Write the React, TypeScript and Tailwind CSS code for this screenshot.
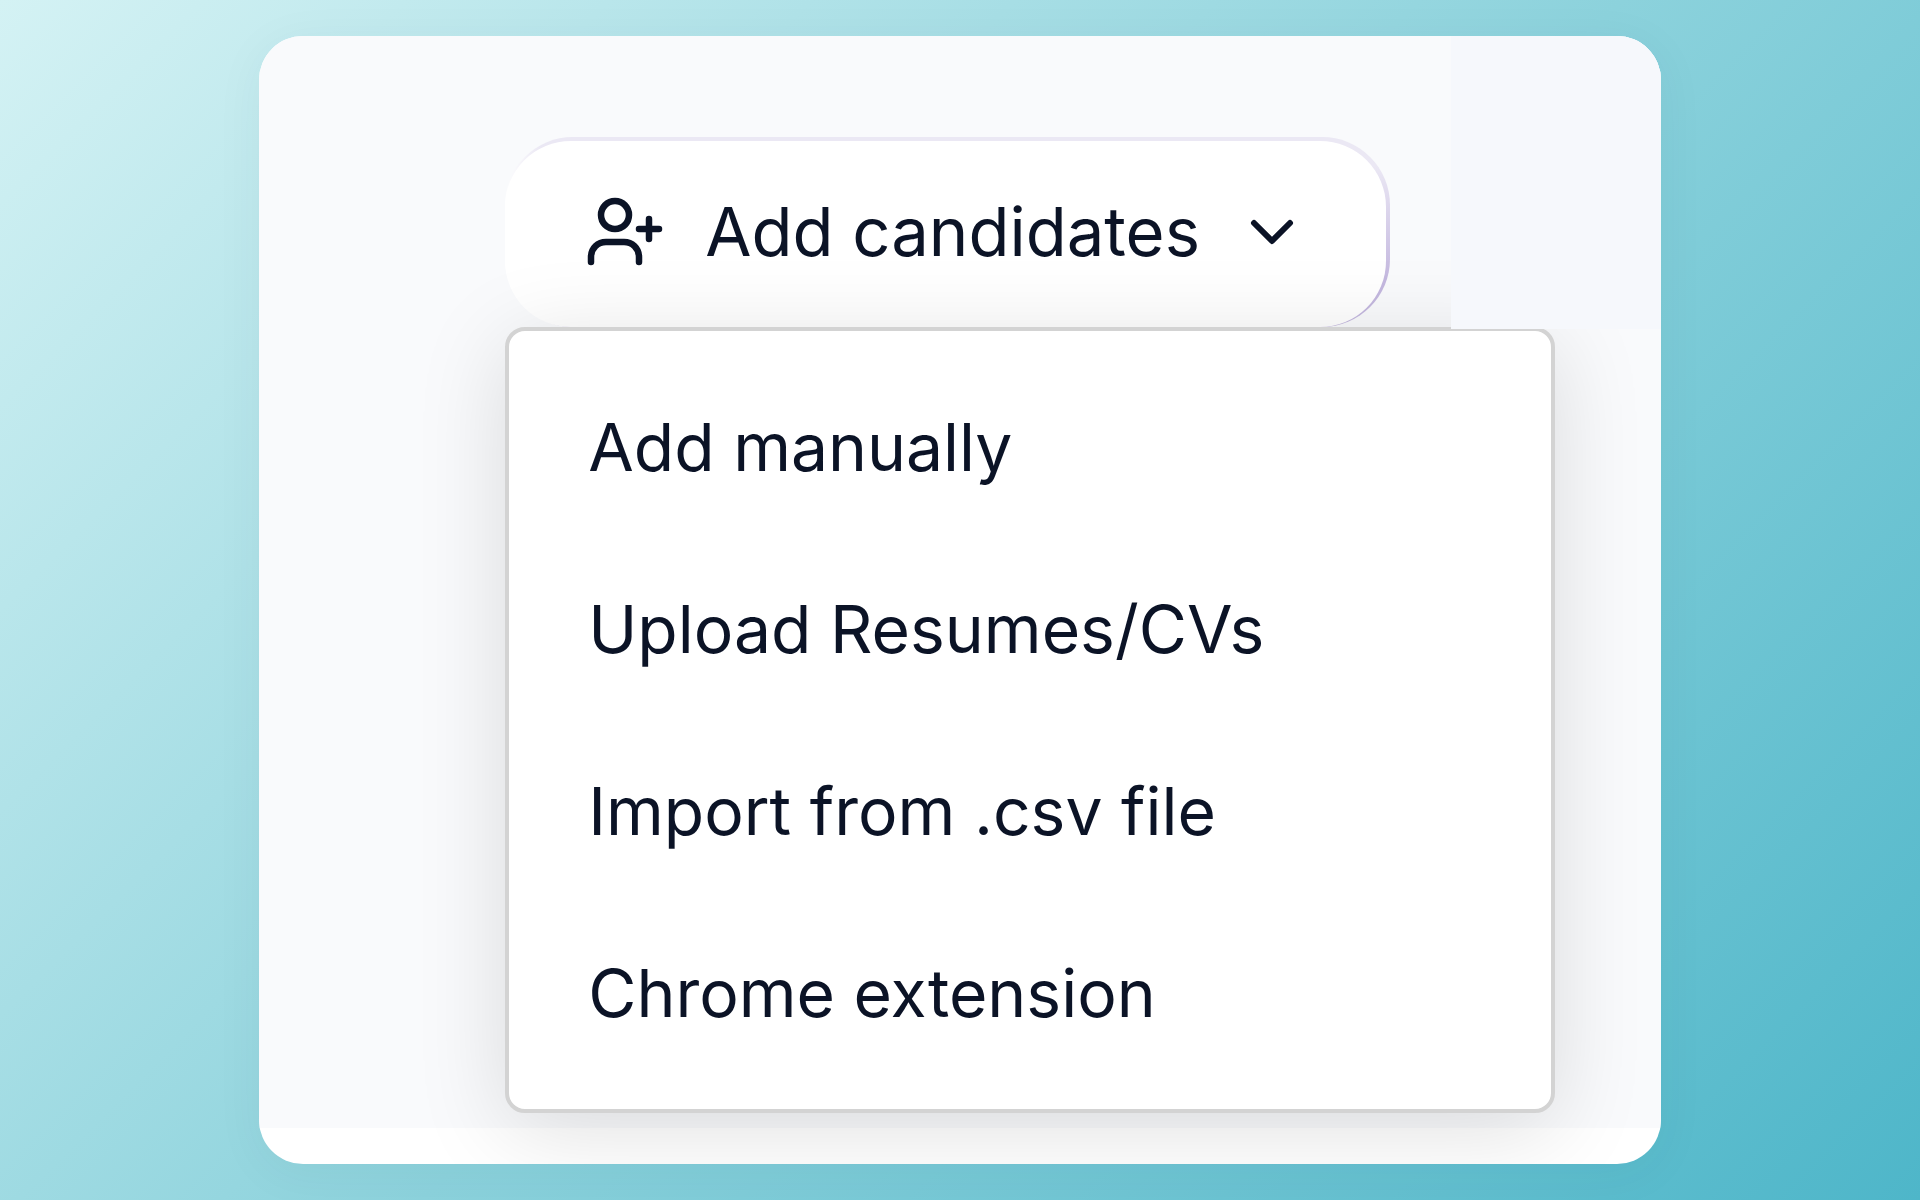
import { ChevronDown } from "lucide-react";

const menuItems = [
  "Add manually",
  "Upload Resumes/CVs",
  "Import from .csv file",
  "Chrome extension",
];

export default function App(): JSX.Element {
  return (
    <main className="flex min-h-screen justify-center bg-[linear-gradient(135deg,#d4f2f4_0%,#8cd2dc_52%,#4eb6c9_100%)] py-9 font-['Inter',sans-serif] text-[#0b1326]">
      <section className="relative w-[73%] overflow-hidden rounded-[44px] bg-white pb-9 shadow-[0_8px_50px_rgba(0,60,80,0.05)]">
        <div className="h-full bg-[#f9fafc] pt-[101px] pr-[106px] pl-[246px]">
          <AddButton />
          <Menu />
        </div>
        <div className="absolute top-0 right-0 h-[293px] w-[210px] bg-[#f6f8fc]" />
      </section>
    </main>
  );
}

function AddButton(): JSX.Element {
  return (
    <div className="w-fit rounded-[68px] bg-[linear-gradient(90deg,#ffffff_0%,#ffffff00_4%),linear-gradient(180deg,#ebe8f4_15%,#c4b8df_75%)] pt-1 pr-1">
      <button className="flex h-[186px] items-center rounded-[66px] bg-white pr-[78px] pb-1 pl-[78px] text-[67px]">
        <UserPlusIcon />
        <span className="ml-[42px]">Add candidates</span>
        <ChevronDown className="ml-9 size-[72px]" strokeWidth={2} />
      </button>
    </div>
  );
}

function Menu(): JSX.Element {
  return (
    <ul className="relative rounded-[20px] border-4 border-[#d3d3d3] bg-white py-[25px] shadow-[0_16px_90px_rgba(0,0,0,0.13)]">
      {menuItems.map((item) => (
        <li key={item}>
          <button className="flex h-[182px] w-full items-center px-[79px] text-[66px]">
            {item}
          </button>
        </li>
      ))}
    </ul>
  );
}

function UserPlusIcon(): JSX.Element {
  return (
    <svg
      viewBox="0 0 80 80"
      className="size-20"
      fill="none"
      stroke="currentColor"
      strokeWidth="6.5"
      strokeLinecap="round"
      strokeLinejoin="round"
    >
      <circle cx="32" cy="23" r="14" />
      <path d="M8 70v-5c0-9 7-15 15-15h18c8 0 15 6 15 15v5" />
      <path d="M66 27v20M56 37h20" />
    </svg>
  );
}
